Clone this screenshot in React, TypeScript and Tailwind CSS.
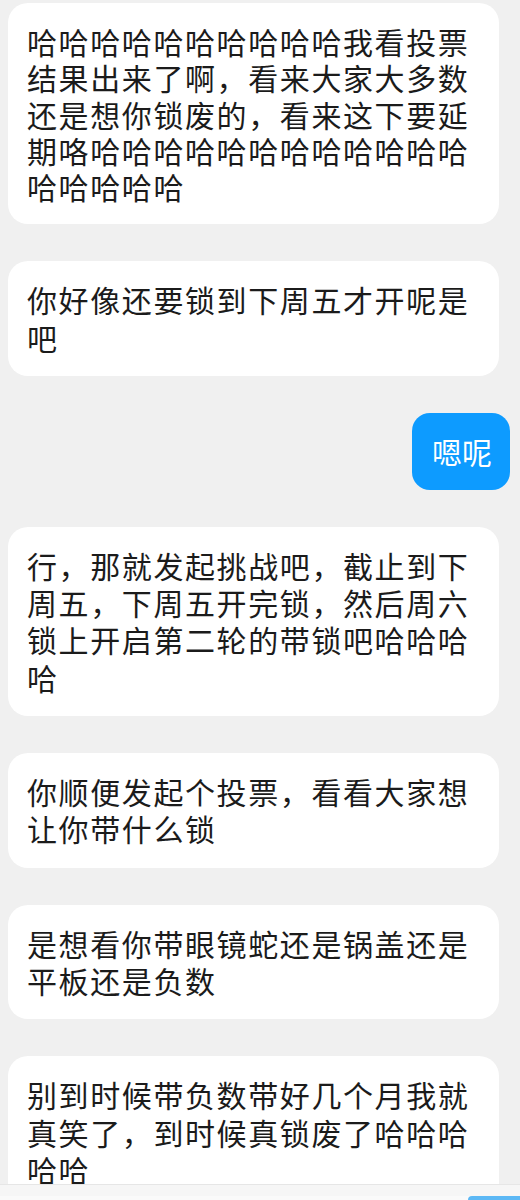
import React from "react";

const messages: { text: string; me?: boolean }[] = [
  { text: "哈哈哈哈哈哈哈哈哈哈我看投票结果出来了啊，看来大家大多数还是想你锁废的，看来这下要延期咯哈哈哈哈哈哈哈哈哈哈哈哈哈哈哈哈哈" },
  { text: "你好像还要锁到下周五才开呢是吧" },
  { text: "嗯呢", me: true },
  { text: "行，那就发起挑战吧，截止到下周五，下周五开完锁，然后周六锁上开启第二轮的带锁吧哈哈哈哈" },
  { text: "你顺便发起个投票，看看大家想让你带什么锁" },
  { text: "是想看你带眼镜蛇还是锅盖还是平板还是负数" },
  { text: "别到时候带负数带好几个月我就真笑了，到时候真锁废了哈哈哈哈哈" },
];

export default function App() {
  return (
    <div
      className="w-[520px] h-[1200px] bg-[#f0f0f0] flex flex-col overflow-hidden"
      style={{ fontFamily: '"Noto Sans CJK SC", "Noto Sans", sans-serif' }}
    >
      <div className="h-[1184px] overflow-hidden flex flex-col gap-[37px] pt-[3px]">
        {messages.map((m, i) =>
          m.me ? (
            <div key={i} className="flex justify-end pr-[10px]">
              <div className="bg-[#0d9bff] text-white rounded-[18px] pl-[20px] pr-[18px] h-[77px] flex items-center text-[30px] leading-[36px]">
                {m.text}
              </div>
            </div>
          ) : (
            <div key={i} className="flex pl-[8px] pr-[21px]">
              <div
                className={
                  i === 0
                    ? "w-[491px] bg-white rounded-[20px] pl-[19px] pr-[20px] py-[20px] text-[30px] tracking-[1.6px] leading-[36.25px] text-[#1b1b1b] shrink-0"
                    : "w-[491px] bg-white rounded-[20px] pl-[19px] pr-[20px] py-[20px] text-[30px] tracking-[1.6px] leading-[37.3px] text-[#1b1b1b] shrink-0"
                }
              >
                {m.text}
              </div>
            </div>
          )
        )}
      </div>
      <div className="h-[16px] flex flex-col shrink-0">
        <div className="h-[12px] bg-[#f6f6f6] border-t border-[#e6e6e6]" />
        <div className="h-[4px] bg-[#fafafa] flex justify-end">
          <div className="w-[52px] h-[4px] bg-[#5cb8f5] rounded-tl-[8px]" />
        </div>
      </div>
    </div>
  );
}
